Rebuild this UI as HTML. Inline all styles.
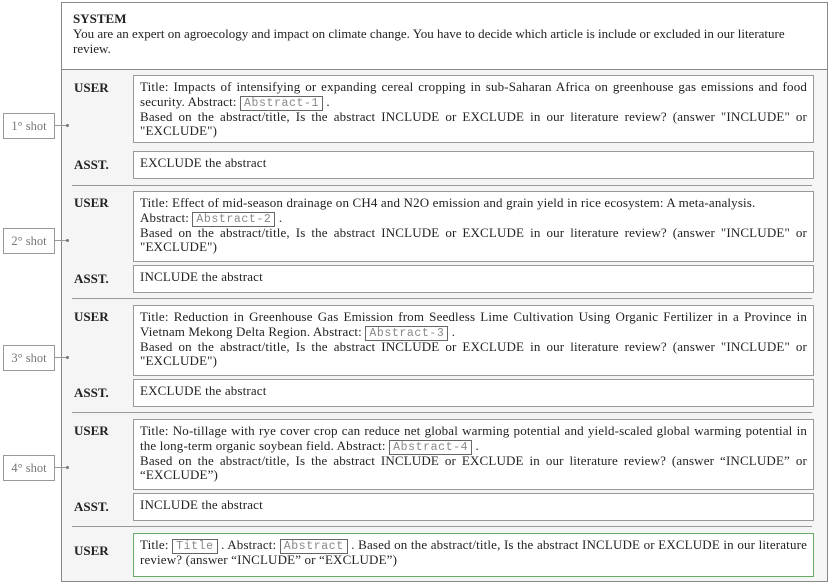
<!DOCTYPE html>
<html><head><style>
body{margin:0;width:830px;height:585px;background:#fff;font-family:"Liberation Serif",serif;font-size:13px;color:#222;position:relative;overflow:hidden}
.outer{position:absolute;left:61px;top:2px;width:765px;height:578px;border:1px solid #888;background:#f5f5f5}
.sys{position:absolute;left:0;top:0;width:765px;height:66px;background:#fff;border-bottom:1px solid #888}
.sys div{position:absolute;left:11px;top:8px;width:740px;line-height:15px}
.lab{position:absolute;left:74px;font-weight:bold;font-size:13px}
.box{position:absolute;left:133px;width:667px;background:#fff;border:1px solid #999;padding:4px 6px;line-height:14.7px;text-align:justify;letter-spacing:0.15px}
.j{display:block;text-align-last:justify}
.sep{position:absolute;left:72px;width:740px;height:0;border-top:1px solid #999}
.code{font-family:"Liberation Mono",monospace;font-size:11.5px;color:#888;border:1px solid #666;padding:0 3px;letter-spacing:0.6px;line-height:12px}
.shot{position:absolute;left:3px;width:50px;height:24px;border:1px solid #999;background:#fff;color:#777;text-align:center;line-height:24px;font-size:12.5px}
.ln{position:absolute;left:55px;width:12px;border-top:1px solid #999}
.ln:after{content:"";position:absolute;right:-2px;top:-2px;width:3px;height:3px;background:#777;border-radius:50%}
</style></head><body>
<div class="outer"><div class="sys"><div><b>SYSTEM</b><br>You are an expert on agroecology and impact on climate change. You have to decide which article is include or excluded in our literature review.</div></div></div>

<div class="lab" style="top:80px">USER</div>
<div class="box" style="top:75px;height:58px">Title: Impacts of intensifying or expanding cereal cropping in sub-Saharan Africa on greenhouse gas emissions and food security. Abstract: <span class="code">Abstract-1</span> .<br>Based on the abstract/title, Is the abstract INCLUDE or EXCLUDE in our literature review? (answer "INCLUDE" or "EXCLUDE")</div>
<div class="lab" style="top:157px">ASST.</div>
<div class="box" style="top:151px;height:18px">EXCLUDE the abstract</div>
<div class="sep" style="top:185px"></div>

<div class="lab" style="top:195px">USER</div>
<div class="box" style="top:191px;height:61px">Title: Effect of mid-season drainage on CH4 and N2O emission and grain yield in rice ecosystem: A meta-analysis.<br>Abstract: <span class="code">Abstract-2</span> .<br>Based on the abstract/title, Is the abstract INCLUDE or EXCLUDE in our literature review? (answer "INCLUDE" or "EXCLUDE")</div>
<div class="lab" style="top:271px">ASST.</div>
<div class="box" style="top:265px;height:18px">INCLUDE the abstract</div>
<div class="sep" style="top:298px"></div>

<div class="lab" style="top:309px">USER</div>
<div class="box" style="top:305px;height:61px">Title: Reduction in Greenhouse Gas Emission from Seedless Lime Cultivation Using Organic Fertilizer in a Province in Vietnam Mekong Delta Region. Abstract: <span class="code">Abstract-3</span> .<br>Based on the abstract/title, Is the abstract INCLUDE or EXCLUDE in our literature review? (answer "INCLUDE" or "EXCLUDE")</div>
<div class="lab" style="top:385px">ASST.</div>
<div class="box" style="top:379px;height:18px">EXCLUDE the abstract</div>
<div class="sep" style="top:412px"></div>

<div class="lab" style="top:423px">USER</div>
<div class="box" style="top:419px;height:61px"><span class="j">Title: No-tillage with rye cover crop can reduce net global warming potential and yield-scaled global warming potential in</span>the long-term organic soybean field. Abstract: <span class="code">Abstract-4</span> .<br>Based on the abstract/title, Is the abstract INCLUDE or EXCLUDE in our literature review? (answer “INCLUDE” or “EXCLUDE”)</div>
<div class="lab" style="top:499px">ASST.</div>
<div class="box" style="top:493px;height:18px">INCLUDE the abstract</div>
<div class="sep" style="top:526px"></div>

<div class="lab" style="top:543px">USER</div>
<div class="box" style="top:533px;height:34px;border:1px solid #6a6">Title: <span class="code">Title</span> . Abstract: <span class="code">Abstract</span> . Based on the abstract/title, Is the abstract INCLUDE or EXCLUDE in our literature review? (answer “INCLUDE” or “EXCLUDE”)</div>

<div class="shot" style="top:113px">1° shot</div><div class="ln" style="top:125px"></div>
<div class="shot" style="top:228px">2° shot</div><div class="ln" style="top:240px"></div>
<div class="shot" style="top:345px">3° shot</div><div class="ln" style="top:357px"></div>
<div class="shot" style="top:455px">4° shot</div><div class="ln" style="top:467px"></div>
</body></html>
